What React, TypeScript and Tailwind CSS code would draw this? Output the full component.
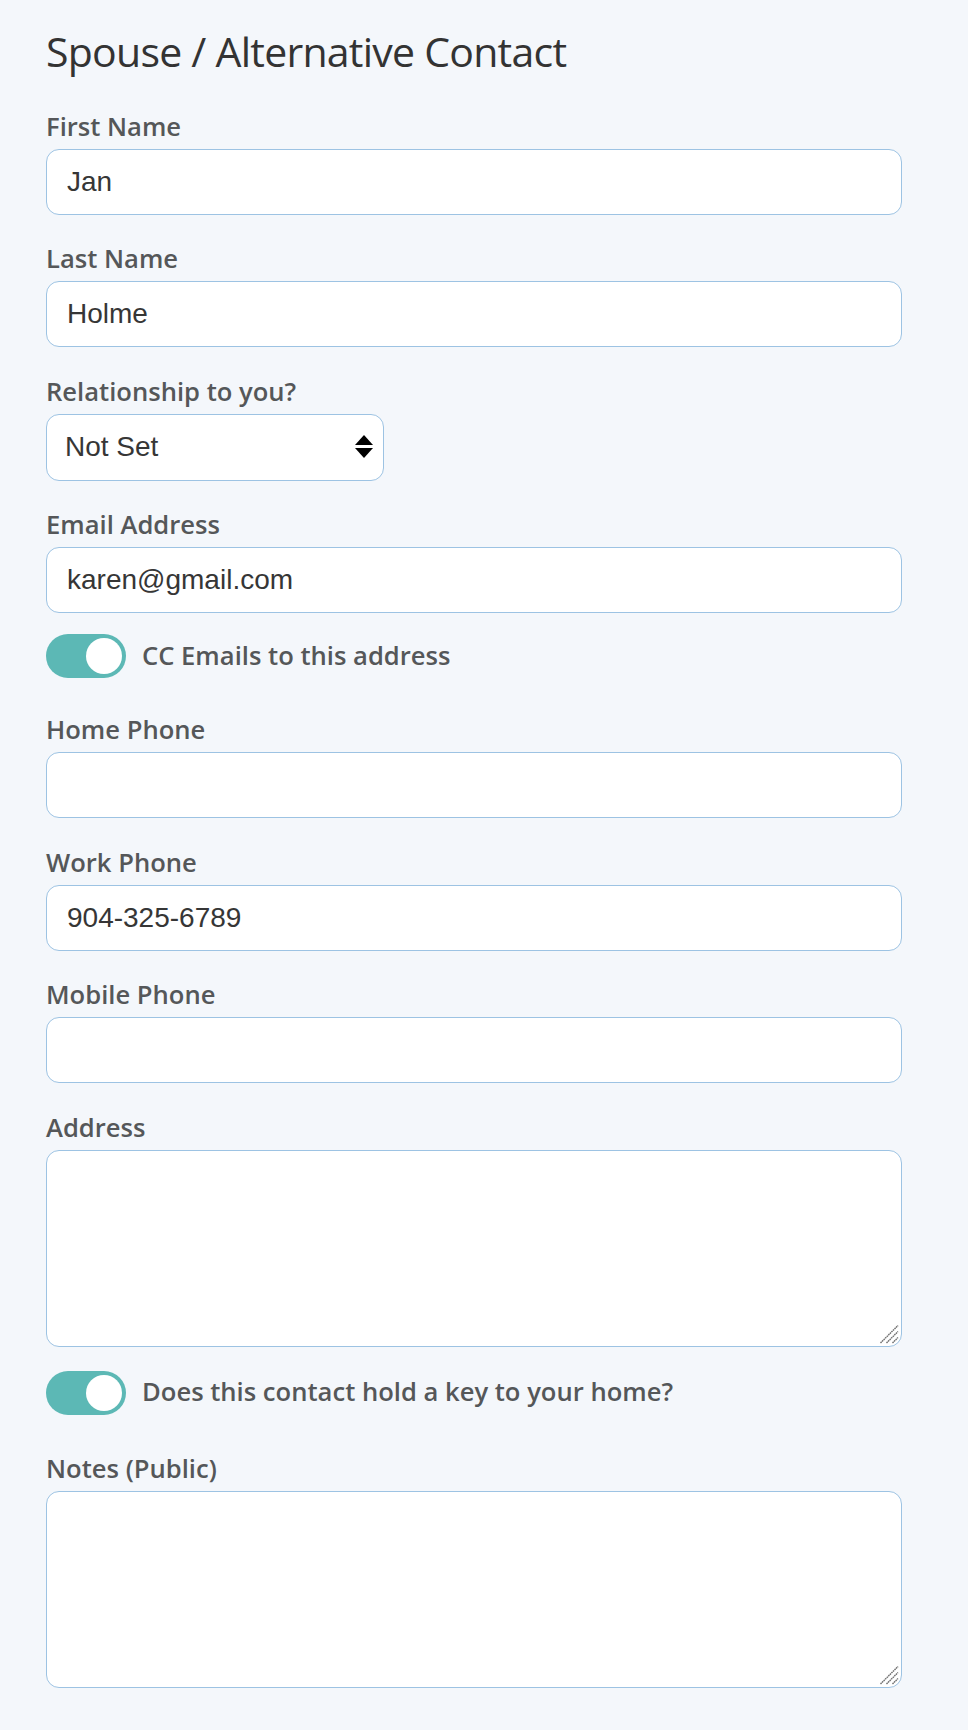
import React from "react";

const labelCls =
  "block h-[32px] leading-[32px] text-[25.6px] font-semibold text-[#555759] mb-[6px] whitespace-nowrap";
const inputCls =
  "block w-full h-[66px] rounded-[13px] border-[1.5px] border-[#9dc3e3] bg-white px-[20px] text-[28px] text-[#363636] outline-none";

function Field({ label, value, className = "" }: { label: string; value?: string; className?: string }) {
  return (
    <div className={className}>
      <label className={labelCls}>{label}</label>
      <input
        readOnly
        value={value ?? ""}
        className={inputCls}
        style={{ fontFamily: '"Liberation Sans", Arial, sans-serif' }}
      />
    </div>
  );
}

function Grip() {
  return (
    <svg
      width="20"
      height="20"
      viewBox="0 0 20 20"
      className="absolute right-[3px] bottom-[3px] pointer-events-none"
    >
      <path
        d="M1.5 19 L19 1.5 M7.5 19 L19 7.5 M13.5 19 L19 13.5"
        stroke="#6e6e6e"
        strokeWidth="1.4"
        strokeDasharray="1.6 0.6"
        fill="none"
      />
    </svg>
  );
}

function AreaField({ label, className = "" }: { label: string; className?: string }) {
  return (
    <div className={className}>
      <label className={labelCls}>{label}</label>
      <div className="relative">
        <textarea
          readOnly
          className="block w-full h-[197px] rounded-[13px] border-[1.5px] border-[#9dc3e3] bg-white px-[20px] py-[12px] text-[28px] text-[#363636] outline-none resize-none"
          style={{ fontFamily: '"Liberation Sans", Arial, sans-serif' }}
        />
        <Grip />
      </div>
    </div>
  );
}

function Toggle({ label, className = "" }: { label: string; className?: string }) {
  return (
    <div className={"flex items-center gap-[16px] " + className}>
      <div className="relative w-[80px] h-[44px] rounded-full bg-[#5cb8b5] shrink-0">
        <div className="absolute right-[4px] top-[4px] w-[36px] h-[36px] rounded-full bg-white" />
      </div>
      <span className="text-[25.6px] font-semibold text-[#555759] whitespace-nowrap">{label}</span>
    </div>
  );
}

export default function App() {
  return (
    <div
      className="min-h-[1730px] bg-[#f4f7fb] pl-[46px] pr-[66px] pt-[26.5px]"
      style={{ fontFamily: '"Open Sans", "Noto Sans", sans-serif' }}
    >
      <h1 className="text-[41px] leading-[48px] font-normal text-[#333333] tracking-[-0.75px]">
        Spouse / Alternative Contact
      </h1>

      <Field label="First Name" value="Jan" className="mt-[36px]" />
      <Field label="Last Name" value="Holme" className="mt-[28.5px]" />

      <div className="mt-[28.5px]">
        <label className={labelCls}>Relationship to you?</label>
        <div className="flex items-center justify-between w-[338px] h-[67px] rounded-[13px] border-[1.5px] border-[#9dc3e3] bg-white pl-[18px] pr-[10px]">
          <span
            className="text-[28px] text-[#363636]"
            style={{ fontFamily: '"Liberation Sans", Arial, sans-serif' }}
          >
            Not Set
          </span>
          <svg width="18" height="24" viewBox="0 0 18 24" className="shrink-0">
            <path d="M9 0 L18 10 L0 10 Z" fill="#000" />
            <path d="M0 13 L18 13 L9 23 Z" fill="#000" />
          </svg>
        </div>
      </div>

      <Field label="Email Address" value="karen@gmail.com" className="mt-[28.5px]" />
      <Toggle label="CC Emails to this address" className="mt-[21px]" />

      <Field label="Home Phone" className="mt-[36px]" />
      <Field label="Work Phone" value="904-325-6789" className="mt-[28.5px]" />
      <Field label="Mobile Phone" className="mt-[28.5px]" />
      <AreaField label="Address" className="mt-[28.5px]" />
      <Toggle label="Does this contact hold a key to your home?" className="mt-[24px]" />
      <AreaField label="Notes (Public)" className="mt-[38px]" />
    </div>
  );
}
